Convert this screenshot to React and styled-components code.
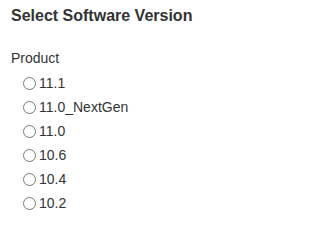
import React from 'react';
import styled, { createGlobalStyle } from 'styled-components';

const GlobalStyle = createGlobalStyle`
  body {
    margin: 0;
    background: #fff;
    font-family: "Liberation Sans", Arial, sans-serif;
    color: #333;
  }
`

const Panel = styled.div`
  padding: 6px 11px;
`

const Title = styled.h3`
  margin: 0;
  font-size: 16px;
  font-weight: bold;
  line-height: 20px;
  color: #333;
`

const Group = styled.fieldset`
  border: 0;
  margin: 22px 0 0;
  padding: 0;
`

const Legend = styled.legend`
  padding: 0;
  font-size: 14px;
  line-height: 20px;
`

const Options = styled.div`
  display: flex;
  flex-direction: column;
  padding-left: 7px;
  margin-top: 3px;
`

const Option = styled.label`
  display: flex;
  align-items: center;
  height: 24px;
  font-size: 14px;
  input {
    width: 13px;
    height: 13px;
    margin: 0 3px 0 5px;
  }
`

const versions = ['11.1', '11.0_NextGen', '11.0', '10.6', '10.4', '10.2']

export default function App () {
  return (
    <Panel>
      <GlobalStyle />
      <Title>Select Software Version</Title>
      <Group>
        <Legend>Product</Legend>
        <Options>
          {versions.map(v => (
            <Option key={v}>
              <input type="radio" name="version" value={v} />
              {v}
            </Option>
          ))}
        </Options>
      </Group>
    </Panel>
  )
}
